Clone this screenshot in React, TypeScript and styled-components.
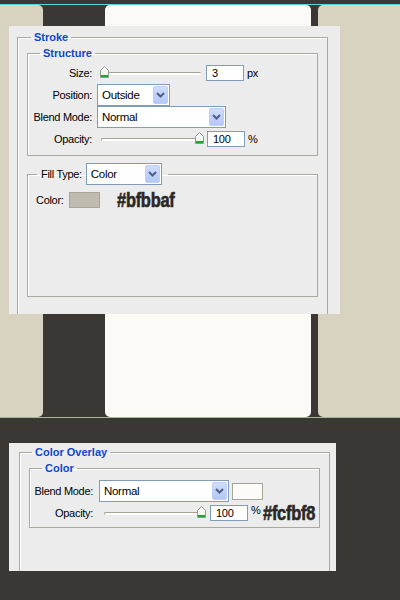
import styled, { createGlobalStyle } from "styled-components";

const GlobalStyle = createGlobalStyle`
  html, body {
    margin: 0;
    padding: 0;
    background: #3a3734;
  }
`;

const Scene = styled.div`
  display: grid;
  width: 400px;
  height: 600px;
  overflow: hidden;
  background: #3a3734;
  font-family: "Liberation Sans", Arial, sans-serif;
  font-size: 11px;
  letter-spacing: -0.3px;
  color: #000;
`;

const Backdrop = styled.div`
  grid-area: 1 / 1;
  display: flex;
  flex-direction: column;
`;

const TopGap = styled.div`
  height: 4px;
`;

const Rule = styled.div`
  height: 1px;
  background: #4fd8da;
`;

const Columns = styled.div`
  display: flex;
  height: 412px;
`;

const Column = styled.div<{ $tone: "beige" | "paper"; $width: number; $offset: number }>`
  width: ${(p) => p.$width}px;
  margin-left: ${(p) => p.$offset}px;
  background: ${(p) => (p.$tone === "beige" ? "#d8d2c1" : "#fbfaf6")};
  border-radius: 5px;
`;

const Foreground = styled.div`
  grid-area: 1 / 1;
  display: flex;
  flex-direction: column;
  align-items: flex-start;
  padding: 26px 0 0 9px;
`;

const Panel = styled.div<{ $width: number; $height: number; $gap: number; $pad: string }>`
  display: flex;
  flex-direction: column;
  box-sizing: border-box;
  width: ${(p) => p.$width}px;
  height: ${(p) => p.$height}px;
  margin-top: ${(p) => p.$gap}px;
  padding: ${(p) => p.$pad};
  background: #ececec;
`;

const Group = styled.fieldset<{ $pad: string; $open?: boolean; $space?: number }>`
  margin: ${(p) => p.$space ?? 0}px 0 0 0;
  padding: ${(p) => p.$pad};
  min-width: 0;
  border: 1px solid #aaa99c;
  border-bottom: ${(p) => (p.$open ? "none" : "1px solid #aaa99c")};
  box-shadow: inset 1px 1px 0 #fff;
  ${(p) => (p.$open ? "flex: 1;" : "")}
`;

const Legend = styled.legend<{ $indent: number }>`
  margin-left: ${(p) => p.$indent}px;
  padding: 0 3px;
  line-height: 13px;
  font-weight: bold;
  color: #0a47d1;
  letter-spacing: 0;
`;

const ControlLegend = styled.legend<{ $indent: number }>`
  display: flex;
  align-items: center;
  gap: 4px;
  margin-left: ${(p) => p.$indent}px;
  padding: 0 6px 0 4px;
`;

const Row = styled.div<{ $label: number }>`
  display: flex;
  align-items: center;
  height: 22px;
  & > label {
    width: ${(p) => p.$label}px;
    text-align: right;
    flex: none;
  }
`;

const Field = styled.div<{ $lead: number }>`
  display: flex;
  align-items: center;
  margin-left: ${(p) => p.$lead}px;
`;

const SelectBox = styled.div<{ $width: number }>`
  display: flex;
  box-sizing: border-box;
  width: ${(p) => p.$width}px;
  height: 22px;
  padding: 1px;
  border: 1px solid #7f9db9;
  background: #fff;
`;

const SelectText = styled.span`
  flex: 1;
  padding-left: 3px;
  line-height: 18px;
  font-size: 11.5px;
`;

const DropButton = styled.span`
  display: flex;
  align-items: center;
  justify-content: center;
  width: 15px;
  box-sizing: border-box;
  border: 1px solid #bccffb;
  border-radius: 2px;
  background: linear-gradient(#cfdcfd, #b4c7f7);
`;

const TextInput = styled.div<{ $width: number }>`
  box-sizing: border-box;
  width: ${(p) => p.$width}px;
  height: 16px;
  padding-left: 5px;
  border: 1px solid #7f9db9;
  background: #fff;
  line-height: 14px;
`;

const Unit = styled.span<{ $raise?: number }>`
  margin-left: 3px;
  position: relative;
  top: ${(p) => -(p.$raise ?? 0)}px;
`;

const Track = styled.div<{ $width: number }>`
  position: relative;
  width: ${(p) => p.$width}px;
  height: 22px;
  &::before {
    content: "";
    position: absolute;
    left: 1px;
    right: 1px;
    top: 10px;
    height: 2px;
    border-radius: 2px;
    background: #fff;
    border-top: 1px solid #a3a295;
    border-left: 1px solid #a3a295;
  }
`;

const Thumb = styled.svg`
  position: absolute;
  top: 4px;
`;

const Swatch = styled.div<{ $color: string; $width: number; $height: number }>`
  box-sizing: border-box;
  width: ${(p) => p.$width}px;
  height: ${(p) => p.$height}px;
  border: 1px solid #a6a59a;
  background: ${(p) => p.$color};
`;

const HexNote = styled.span<{ $lead: number }>`
  display: inline-block;
  margin-left: ${(p) => p.$lead}px;
  font-family: "Liberation Sans", sans-serif;
  font-weight: bold;
  font-size: 21px;
  line-height: 20px;
  letter-spacing: -0.3px;
  color: #2a2724;
  transform: scaleX(0.78);
  transform-origin: left center;
  -webkit-text-stroke: 0.6px #2a2724;
`;

function Chevron() {
  return (
    <svg width="9" height="6" viewBox="0 0 9 6">
      <path d="M1 1 L4.5 4.5 L8 1" fill="none" stroke="#4d6185" strokeWidth="2" />
    </svg>
  );
}

function Select({ value, width }: { value: string; width: number }) {
  return (
    <SelectBox $width={width}>
      <SelectText>{value}</SelectText>
      <DropButton>
        <Chevron />
      </DropButton>
    </SelectBox>
  );
}

function Slider({ width, value }: { width: number; value: number }) {
  const left = (value / 100) * (width - 9);
  return (
    <Track $width={width}>
      <Thumb width="9" height="12" viewBox="0 0 9 12" style={{ left }}>
        <defs>
          <linearGradient id="thumbFill" x1="0" y1="0" x2="0" y2="1">
            <stop offset="0" stopColor="#ffffff" />
            <stop offset="0.7" stopColor="#eef5ee" />
            <stop offset="1" stopColor="#cfe8cf" />
          </linearGradient>
        </defs>
        <path d="M0.5 4.5 L4.5 0.5 L8.5 4.5 L8.5 11.5 L0.5 11.5 Z" fill="url(#thumbFill)" stroke="#8e9a8e" />
        <rect x="1" y="9" width="7" height="2" fill="#21a336" />
      </Thumb>
    </Track>
  );
}

export default function App() {
  return (
    <Scene>
      <GlobalStyle />
      <Backdrop>
        <TopGap />
        <Rule />
        <Columns>
          <Column $tone="beige" $width={49} $offset={-6} />
          <Column $tone="paper" $width={206} $offset={62} />
          <Column $tone="beige" $width={90} $offset={7} />
        </Columns>
        <Rule />
      </Backdrop>

      <Foreground>
        <Panel $width={331} $height={288} $gap={0} $pad="5px 12px 0 8px">
          <Group $pad="3px 9px 0 9px" $open>
            <Legend $indent={4}>Stroke</Legend>

            <Group $pad="2px 0 5px 0">
              <Legend $indent={12}>Structure</Legend>
              <Row $label={64}>
                <label>Size:</label>
                <Field $lead={8}>
                  <Slider width={102} value={0} />
                  <Field $lead={4}>
                    <TextInput $width={38}>3</TextInput>
                    <Unit>px</Unit>
                  </Field>
                </Field>
              </Row>
              <Row $label={64}>
                <label>Position:</label>
                <Field $lead={5}>
                  <Select value="Outside" width={73} />
                </Field>
              </Row>
              <Row $label={64}>
                <label>Blend Mode:</label>
                <Field $lead={5}>
                  <Select value="Normal" width={129} />
                </Field>
              </Row>
              <Row $label={64}>
                <label>Opacity:</label>
                <Field $lead={8}>
                  <Slider width={104} value={100} />
                  <Field $lead={3}>
                    <TextInput $width={38}>100</TextInput>
                    <Unit>%</Unit>
                  </Field>
                </Field>
              </Row>
            </Group>

            <Group $pad="5px 0 86px 8px" $space={7}>
              <ControlLegend $indent={1}>
                <label>Fill Type:</label>
                <Select value="Color" width={76} />
              </ControlLegend>
              <Field $lead={0}>
                <label>Color:</label>
                <Field $lead={5}>
                  <Swatch $color="#bfbbaf" $width={31} $height={16} />
                </Field>
                <HexNote $lead={17}>#bfbbaf</HexNote>
              </Field>
            </Group>
          </Group>
        </Panel>

        <Panel $width={327} $height={128} $gap={129} $pad="3px 6px 0 10px">
          <Group $pad="3px 9px 0 9px" $open>
            <Legend $indent={3}>Color Overlay</Legend>
            <Group $pad="5px 0 3px 0">
              <Legend $indent={12}>Color</Legend>
              <Row $label={63}>
                <label>Blend Mode:</label>
                <Field $lead={6}>
                  <Select value="Normal" width={130} />
                  <Field $lead={3}>
                    <Swatch $color="#fcfbf8" $width={31} $height={17} />
                  </Field>
                </Field>
              </Row>
              <Row $label={63}>
                <label>Opacity:</label>
                <Field $lead={10}>
                  <Slider width={103} value={100} />
                  <Field $lead={4}>
                    <TextInput $width={38}>100</TextInput>
                    <Unit $raise={3}>%</Unit>
                    <HexNote $lead={3}>#fcfbf8</HexNote>
                  </Field>
                </Field>
              </Row>
            </Group>
          </Group>
        </Panel>
      </Foreground>
    </Scene>
  );
}
